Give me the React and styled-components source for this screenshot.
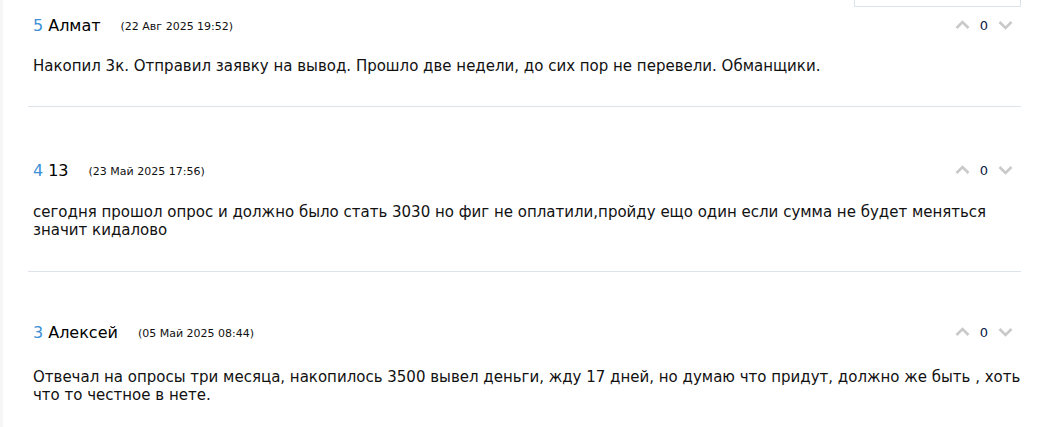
import React from 'react';
import styled, { createGlobalStyle } from 'styled-components';

const GlobalStyle = createGlobalStyle`
  html, body {
    margin: 0;
    padding: 0;
    background: #fff;
  }
  body {
    font-family: "DejaVu Sans", Verdana, sans-serif;
    color: #111;
  }
`;

const Page = styled.div`
  border-left: 3px solid #f6f6f6;
  min-height: 427px;
  box-sizing: border-box;
  padding: 0 24px 0 25px;
  overflow: hidden;
`;

const TopStrip = styled.div`
  display: flex;
  justify-content: flex-end;
  height: 7px;
`;

const ReplyBoxEdge = styled.div`
  width: 165px;
  height: 6px;
  border: 1px solid #dde3ea;
  border-top: none;
`;

const CommentList = styled.div`
  padding-top: 8px;
`;

const Comment = styled.div`
  border-bottom: 1px solid #dde3ea;
  padding-bottom: ${p => p.$pb}px;
  margin-bottom: ${p => p.$mb}px;
`;

const Header = styled.div`
  display: flex;
  align-items: center;
  height: 20px;
  padding: 0 8px 0 5px;
`;

const Num = styled.span`
  color: #3d8fd6;
  font-size: 16px;
  margin-right: 5px;
`;

const Name = styled.span`
  color: #000;
  font-size: 16px;
  margin-right: 20px;
`;

const Date = styled.span`
  font-size: 11px;
  color: #111;
  position: relative;
  top: 1px;
`;

const Votes = styled.div`
  margin-left: auto;
  display: flex;
  align-items: center;
  gap: 10px;
`;

const VoteBtn = styled.span`
  display: inline-flex;
  width: 15px;
  height: 14px;
  align-items: center;
  justify-content: center;
`;

const Score = styled.span`
  font-size: 13px;
  color: #0a1a44;
`;

const Text = styled.p`
  margin: ${p => p.$gap}px -16px 0 0;
  padding: 0 5px;
  font-size: 15px;
  line-height: 18px;
  color: #111;
`;

const Chevron = ({ up }) => (
  <svg width="15" height="10" viewBox="0 0 15 10">
    <path
      d={up ? 'M1.5 8 L7.5 2 L13.5 8' : 'M1.5 2 L7.5 8 L13.5 2'}
      fill="none"
      stroke="#c9c9c9"
      strokeWidth="2.6"
    />
  </svg>
);

const comments = [
  {
    num: 5,
    name: 'Алмат',
    date: '(22 Авг 2025 19:52)',
    text: 'Накопил 3к. Отправил заявку на вывод. Прошло две недели, до сих пор не перевели. Обманщики.',
    gap: 22,
    pb: 31,
    mb: 53,
  },
  {
    num: 4,
    name: '13',
    date: '(23 Май 2025 17:56)',
    text: 'сегодня прошол опрос и должно было стать 3030 но фиг не оплатили,пройду ещо один если сумма не будет меняться значит кидалово',
    gap: 23,
    pb: 32,
    mb: 50,
  },
  {
    num: 3,
    name: 'Алексей',
    date: '(05 Май 2025 08:44)',
    text: 'Отвечал на опросы три месяца, накопилось 3500 вывел деньги, жду 17 дней, но думаю что придут, должно же быть , хоть что то честное в нете.',
    gap: 26,
    pb: 30,
    mb: 0,
  },
];

export default function App() {
  return (
    <>
      <GlobalStyle />
      <Page>
        <TopStrip>
          <ReplyBoxEdge />
        </TopStrip>
        <CommentList>
          {comments.map(c => (
            <Comment key={c.num} $pb={c.pb} $mb={c.mb}>
              <Header>
                <Num>{c.num}</Num>
                <Name>{c.name}</Name>
                <Date>{c.date}</Date>
                <Votes>
                  <VoteBtn><Chevron up /></VoteBtn>
                  <Score>0</Score>
                  <VoteBtn><Chevron /></VoteBtn>
                </Votes>
              </Header>
              <Text $gap={c.gap}>{c.text}</Text>
            </Comment>
          ))}
        </CommentList>
      </Page>
    </>
  );
}
